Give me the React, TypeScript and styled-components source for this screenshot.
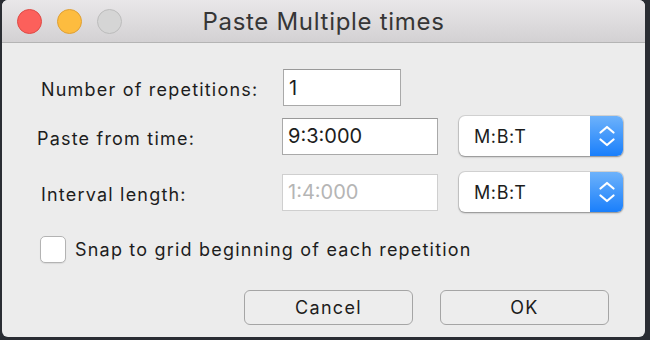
import styled, { createGlobalStyle } from 'styled-components';

const GlobalStyle = createGlobalStyle`
  html, body {
    margin: 0;
    padding: 0;
    background: #2a2d33;
  }
  body {
    width: 650px;
    height: 340px;
    overflow: hidden;
  }
`;

const Window = styled.div`
  margin-left: 2px;
  width: 643px;
  height: 337px;
  border-radius: 6px;
  overflow: hidden;
  background: #ececec;
  font-family: Inter, "Liberation Sans", sans-serif;
  color: #1d1d1d;
  display: flex;
  flex-direction: column;
`;

const TitleBar = styled.div`
  height: 42px;
  flex-shrink: 0;
  display: grid;
  grid-template-columns: 1fr auto 1fr;
  align-items: center;
  background: linear-gradient(#e9e7e9, #d3d1d3);
  border-bottom: 1px solid #b4b4b4;
`;

const Lights = styled.div`
  display: flex;
  gap: 15px;
  padding-left: 15px;
`;

const Light = styled.span<{ $fill: string; $edge: string }>`
  width: 25px;
  height: 25px;
  box-sizing: border-box;
  border-radius: 50%;
  background: ${p => p.$fill};
  border: 1px solid ${p => p.$edge};
`;

const Title = styled.div`
  font-size: 24px;
  letter-spacing: 0.7px;
  color: #363636;
`;

const Content = styled.div`
  padding: 26px 36px 0 35px;
  display: flex;
  flex-direction: column;
`;

const Row = styled.div<{ $top: number }>`
  display: flex;
  align-items: center;
  margin-top: ${p => p.$top}px;

  & > * {
    flex-shrink: 0;
  }
`;

const Label = styled.span<{ $indent: number }>`
  width: 245px;
  box-sizing: border-box;
  padding-left: ${p => p.$indent}px;
  padding-top: 4px;
  font-size: 18px;
  letter-spacing: 1.2px;
  white-space: nowrap;
`;

const Field = styled.input<{ $w: number; $shift?: number }>`
  width: ${p => p.$w}px;
  height: 37px;
  box-sizing: border-box;
  margin: 0 0 0 ${p => p.$shift ?? 0}px;
  padding: 0 5px;
  border: 1px solid #a9a9a9;
  border-top-color: #999;
  border-radius: 0;
  background: #fff;
  font-family: inherit;
  font-size: 20px;
  letter-spacing: 0;
  color: #1d1d1d;
  outline: none;

  &:disabled {
    border-color: #cfcfcf;
    color: #b5b5b5;
  }
`;

const Select = styled.div`
  margin-left: 21px;
  width: 164px;
  height: 40px;
  box-sizing: border-box;
  display: flex;
  align-items: center;
  border-radius: 6px;
  background: #fff;
  box-shadow: 0 0 0 1px rgba(0, 0, 0, 0.1), 0 1px 2px rgba(0, 0, 0, 0.35);
  overflow: hidden;
`;

const SelectText = styled.span`
  flex: 1;
  padding-left: 15px;
  font-size: 18px;
  letter-spacing: 0.6px;
`;

const Stepper = styled.span`
  width: 33px;
  height: 100%;
  display: flex;
  align-items: center;
  justify-content: center;
  background: linear-gradient(#6db2fb, #1a7ffb);
`;

const CheckRow = styled.label`
  display: flex;
  align-items: center;
  margin-top: 24px;
  padding-left: 3px;
  gap: 9px;
  font-size: 18px;
  letter-spacing: 1.2px;
`;

const CheckBox = styled.span`
  width: 26px;
  height: 27px;
  box-sizing: border-box;
  border-radius: 5px;
  border: 1px solid #b3b3b3;
  background: #fff;
  box-shadow: 0 1px 1px rgba(0, 0, 0, 0.08);
`;

const Buttons = styled.div`
  display: flex;
  justify-content: flex-end;
  gap: 27px;
  margin-top: 27px;
`;

const Button = styled.button`
  width: 169px;
  height: 35px;
  box-sizing: border-box;
  border: 1px solid #a5a5a5;
  border-radius: 6px;
  background: #ededed;
  font-family: inherit;
  font-size: 18px;
  letter-spacing: 1.3px;
  color: #1d1d1d;
  padding: 0;
`;

const Chevrons = () => (
  <svg width="16" height="24" viewBox="0 0 16 24" fill="none">
    <path d="M1.5 8.5 L8 3 L14.5 8.5" stroke="#fff" strokeWidth="2.2" strokeLinecap="round" strokeLinejoin="round" />
    <path d="M1.5 15.5 L8 21 L14.5 15.5" stroke="#fff" strokeWidth="2.2" strokeLinecap="round" strokeLinejoin="round" />
  </svg>
);

const UnitSelect = () => (
  <Select>
    <SelectText>M:B:T</SelectText>
    <Stepper>
      <Chevrons />
    </Stepper>
  </Select>
);

export default function App() {
  return (
    <>
      <GlobalStyle />
      <Window>
        <TitleBar>
          <Lights>
            <Light $fill="#fc605b" $edge="#de4b46" />
            <Light $fill="#fdbc3f" $edge="#dfa034" />
            <Light $fill="#d5d5d5" $edge="#bcbcbc" />
          </Lights>
          <Title>Paste Multiple times</Title>
          <span />
        </TitleBar>
        <Content>
          <Row $top={0}>
            <Label $indent={4}>Number of repetitions:</Label>
            <Field $w={118} $shift={1} defaultValue="1" readOnly />
          </Row>
          <Row $top={10}>
            <Label $indent={0}>Paste from time:</Label>
            <Field $w={156} defaultValue="9:3:000" readOnly />
            <UnitSelect />
          </Row>
          <Row $top={16}>
            <Label $indent={4}>Interval length:</Label>
            <Field $w={156} defaultValue="1:4:000" disabled />
            <UnitSelect />
          </Row>
          <CheckRow>
            <CheckBox />
            Snap to grid beginning of each repetition
          </CheckRow>
          <Buttons>
            <Button>Cancel</Button>
            <Button>OK</Button>
          </Buttons>
        </Content>
      </Window>
    </>
  );
}
